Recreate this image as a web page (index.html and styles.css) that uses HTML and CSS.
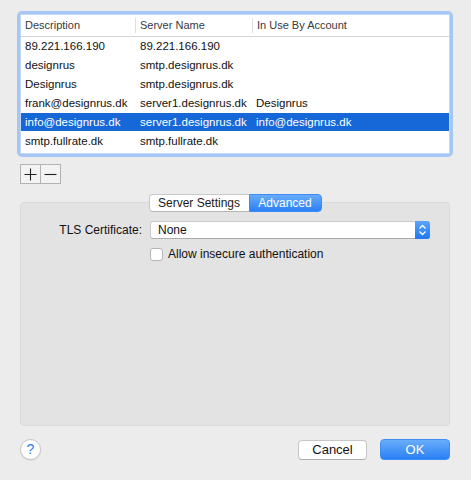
FILE: index.html
```html
<!DOCTYPE html>
<html lang="en">
<head>
<meta charset="utf-8">
<title>SMTP Servers</title>
<link rel="stylesheet" href="styles.css">
</head>
<body>
<div class="window">
  <div class="table-frame">
    <div class="table">
      <div class="thead">
        <div class="th">Description</div>
        <div class="th sep">Server Name</div>
        <div class="th sep">In Use By Account</div>
      </div>
      <div class="tr"><div class="td">89.221.166.190</div><div class="td col2">89.221.166.190</div><div class="td"></div></div>
      <div class="tr"><div class="td">designrus</div><div class="td col2">smtp.designrus.dk</div><div class="td"></div></div>
      <div class="tr"><div class="td">Designrus</div><div class="td col2">smtp.designrus.dk</div><div class="td"></div></div>
      <div class="tr"><div class="td">frank@designrus.dk</div><div class="td col2">server1.designrus.dk</div><div class="td">Designrus</div></div>
      <div class="tr selected"><div class="td">info@designrus.dk</div><div class="td col2">server1.designrus.dk</div><div class="td">info@designrus.dk</div></div>
      <div class="tr"><div class="td">smtp.fullrate.dk</div><div class="td col2">smtp.fullrate.dk</div><div class="td"></div></div>
    </div>
  </div>

  <div class="pm">
    <button class="pm-btn first" aria-label="Add">
      <svg width="13" height="13" viewBox="0 0 13 13"><path d="M6.5 0.5v12M0.5 6.5h12" stroke="#222" stroke-width="1.1" fill="none"/></svg>
    </button>
    <button class="pm-btn" aria-label="Remove">
      <svg width="13" height="13" viewBox="0 0 13 13"><path d="M0.5 6.5h12" stroke="#222" stroke-width="1.1" fill="none"/></svg>
    </button>
  </div>

  <div class="tabview">
    <div class="segmented">
      <div class="seg">Server Settings</div>
      <div class="seg active">Advanced</div>
    </div>
    <div class="panel">
      <div class="form-row">
        <div class="label">TLS Certificate:</div>
        <div class="popup">
          <span class="popup-value">None</span>
          <span class="stepper">
            <svg width="9" height="12" viewBox="0 0 9 12"><path d="M1.5 4.5L4.5 1.5L7.5 4.5M1.5 7.5L4.5 10.5L7.5 7.5" stroke="#fff" stroke-width="1.3" fill="none"/></svg>
          </span>
        </div>
      </div>
      <label class="check-row">
        <span class="checkbox"></span>
        <span>Allow insecure authentication</span>
      </label>
    </div>
  </div>

  <div class="footer">
    <button class="help" aria-label="Help">?</button>
    <div class="spacer"></div>
    <button class="btn">Cancel</button>
    <button class="btn primary">OK</button>
  </div>
</div>
</body>
</html>
```

FILE: styles.css
```css
html, body {
  margin: 0;
  padding: 0;
}

body {
  width: 471px;
  height: 480px;
  background: #ececec;
  font-family: "Liberation Sans", Arial, sans-serif;
  color: #111;
  overflow: hidden;
}

.window {
  padding: 11px 18px 0 17px;
}

/* server list with focus ring */
.table-frame {
  height: 146px;
  box-sizing: border-box;
  border: 3px solid #a4c8f3;
  border-radius: 5px;
}

.table {
  height: 100%;
  box-sizing: border-box;
  border: 1px solid #c2d8f2;
  background: #fff;
  font-size: 11.5px;
}

.thead {
  display: grid;
  grid-template-columns: 114px 117px 1fr;
  height: 22px;
  box-sizing: border-box;
  padding: 3px 0;
  border-bottom: 1px solid #d6d6d6;
  color: #3a3a3a;
  font-size: 11px;
}

.th {
  padding-left: 4px;
  line-height: 15px;
}

.th.sep {
  border-left: 1px solid #dedede;
}

.tr {
  display: grid;
  grid-template-columns: 114px 117px 1fr;
  height: 18px;
  line-height: 18px;
  margin-bottom: 1px;
}

.td {
  padding-left: 4px;
  white-space: nowrap;
  overflow: hidden;
}

.td.col2 {
  padding-left: 5px;
}

.tr.selected {
  background: #1667d7;
  color: #fff;
}

/* add / remove buttons */
.pm {
  display: flex;
  margin: 7px 0 0 3px;
}

.pm-btn {
  width: 21px;
  height: 20px;
  box-sizing: border-box;
  padding: 0;
  margin: 0;
  border: 1px solid #b3b3b3;
  background: #f3f3f3;
  display: flex;
  align-items: center;
  justify-content: center;
}

.pm-btn + .pm-btn {
  width: 20px;
  border-left: none;
}

/* tab view */
.tabview {
  margin: 10px 0 0 3px;
  width: 430px;
}

.segmented {
  display: flex;
  justify-content: center;
  position: relative;
  z-index: 1;
  font-size: 12px;
}

.seg {
  height: 18px;
  line-height: 17px;
  box-sizing: border-box;
  text-align: center;
  background: #fff;
  border: 1px solid #c8c8c8;
  border-bottom-color: #b5b5b5;
  color: #1a1a1a;
}

.seg:first-child {
  width: 100px;
  border-radius: 4px 0 0 4px;
  border-right: none;
}

.seg.active {
  width: 73px;
  border-radius: 0 4px 4px 0;
  border-color: #3d8cf5;
  background: linear-gradient(#67acfa, #2b80f5);
  color: #fff;
}

.panel {
  margin-top: -10px;
  height: 224px;
  box-sizing: border-box;
  background: #e3e3e3;
  border: 1px solid #dadada;
  border-radius: 4px;
  padding-top: 18px;
  font-size: 12px;
}

.form-row {
  display: flex;
  align-items: center;
}

.label {
  width: 121px;
  text-align: right;
  margin-right: 8px;
}

.popup {
  width: 280px;
  height: 18px;
  box-sizing: border-box;
  display: flex;
  align-items: stretch;
  background: #fff;
  border: 1px solid #c9c9c9;
  border-bottom-color: #adadad;
  border-radius: 3px;
}

.popup-value {
  flex: 1;
  padding-left: 7px;
  line-height: 16px;
}

.stepper {
  width: 15px;
  margin: -1px -1px -1px 0;
  border-radius: 0 3px 3px 0;
  background: linear-gradient(#5aa4fa, #1f77f2);
  display: flex;
  align-items: center;
  justify-content: center;
}

.check-row {
  display: flex;
  align-items: center;
  margin: 8px 0 0 129px;
}

.checkbox {
  width: 13px;
  height: 13px;
  box-sizing: border-box;
  background: #fff;
  border: 1px solid #b5b5b5;
  border-radius: 3px;
  margin-right: 5px;
}

/* dialog buttons */
.footer {
  display: flex;
  align-items: center;
  margin: 13px 3px 0 3px;
}

.spacer {
  flex: 1;
}

.help {
  width: 21px;
  height: 21px;
  padding: 0;
  border-radius: 50%;
  border: 1px solid #c4c4c4;
  background: #fff;
  color: #2d7cf1;
  font-family: "Liberation Sans", Arial, sans-serif;
  font-size: 14px;
  line-height: 19px;
  text-align: center;
  box-shadow: 0 1px 1px rgba(0, 0, 0, 0.08);
}

.btn {
  height: 20px;
  box-sizing: border-box;
  padding: 0;
  border-radius: 4px;
  font-family: "Liberation Sans", Arial, sans-serif;
  font-size: 13px;
  line-height: 18px;
  text-align: center;
  width: 69px;
  background: #fff;
  border: 1px solid #c6c6c6;
  border-bottom-color: #adadad;
  color: #111;
}

.btn.primary {
  width: 70px;
  height: 21px;
  margin-left: 13px;
  border: 1px solid #3e8ef6;
  background: linear-gradient(#69aefa, #2a7ff5);
  color: #fff;
}
```
